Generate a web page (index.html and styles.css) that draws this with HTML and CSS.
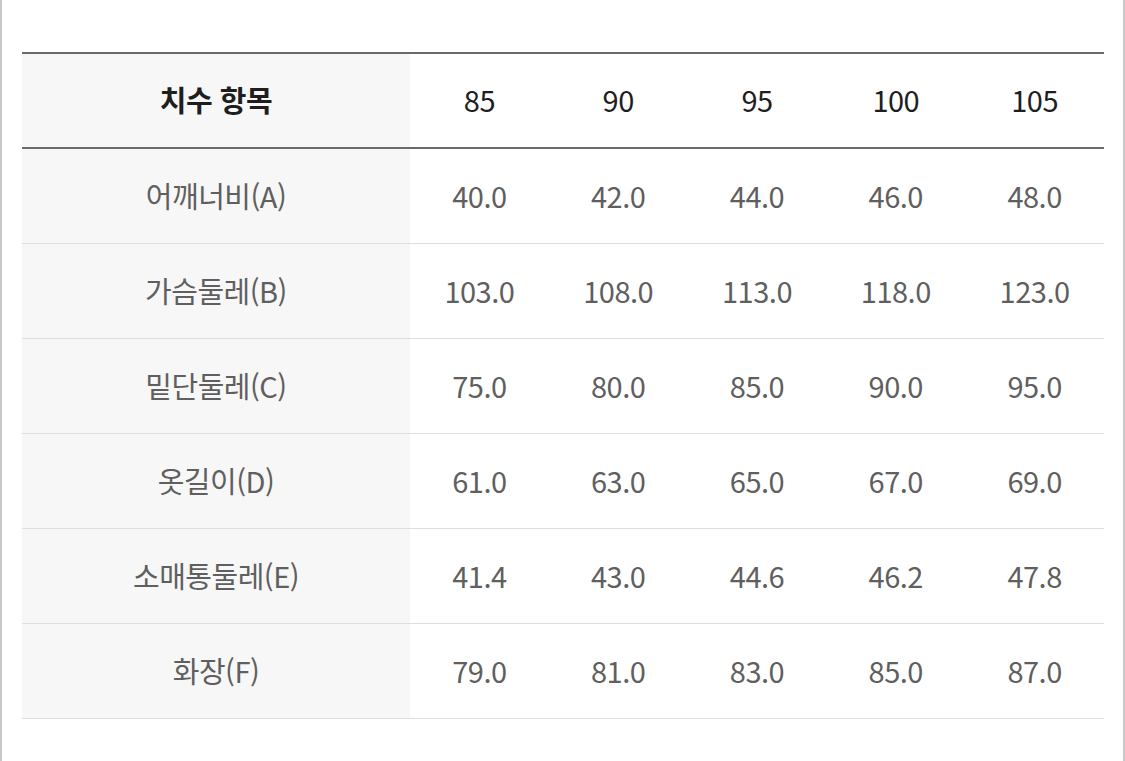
FILE: index.html
```html
<!DOCTYPE html>
<html lang="ko">
<head>
<meta charset="utf-8">
<link rel="stylesheet" href="styles.css">
</head>
<body>
<div class="frame">
  <table class="size-table">
    <thead>
      <tr><th class="label">치수 항목</th><th>85</th><th>90</th><th>95</th><th>100</th><th>105</th></tr>
    </thead>
    <tbody>
      <tr><td class="label">어깨너비(A)</td><td>40.0</td><td>42.0</td><td>44.0</td><td>46.0</td><td>48.0</td></tr>
      <tr><td class="label">가슴둘레(B)</td><td>103.0</td><td>108.0</td><td>113.0</td><td>118.0</td><td>123.0</td></tr>
      <tr><td class="label">밑단둘레(C)</td><td>75.0</td><td>80.0</td><td>85.0</td><td>90.0</td><td>95.0</td></tr>
      <tr><td class="label">옷길이(D)</td><td>61.0</td><td>63.0</td><td>65.0</td><td>67.0</td><td>69.0</td></tr>
      <tr><td class="label">소매통둘레(E)</td><td>41.4</td><td>43.0</td><td>44.6</td><td>46.2</td><td>47.8</td></tr>
      <tr><td class="label">화장(F)</td><td>79.0</td><td>81.0</td><td>83.0</td><td>85.0</td><td>87.0</td></tr>
    </tbody>
  </table>
</div>
</body>
</html>
```
FILE: styles.css
```css
html, body {
  margin: 0;
  padding: 0;
  background: #fff;
}
.frame {
  box-sizing: border-box;
  width: 1125px;
  height: 761px;
  border-left: 2px solid #c8c8c8;
  border-right: 2px solid #c8c8c8;
  padding: 52px 19px 0 20px;
}
.size-table {
  width: 1082px;
  border-collapse: collapse;
  table-layout: fixed;
  font-family: "Noto Sans CJK KR", "Noto Sans", sans-serif;
  font-size: 29px;
  letter-spacing: -0.5px;
  line-height: 1;
}
.size-table th, .size-table td {
  box-sizing: border-box;
  text-align: center;
  vertical-align: middle;
  border-bottom: 1px solid #dedede;
}
.size-table th.label, .size-table td.label {
  width: 388px;
  background: #f7f7f7;
}
.size-table thead th {
  height: 95px;
  padding: 0 0 3px 0;
  border-top: 2px solid #6a6a6a;
  border-bottom: 2px solid #6a6a6a;
  color: #1e1e1e;
  font-weight: 400;
}
.size-table thead th.label {
  font-weight: 700;
}
.size-table tbody td {
  height: 95px;
  padding: 0 0 1px 0;
  color: #5f5f5f;
  font-weight: 400;
}
```
